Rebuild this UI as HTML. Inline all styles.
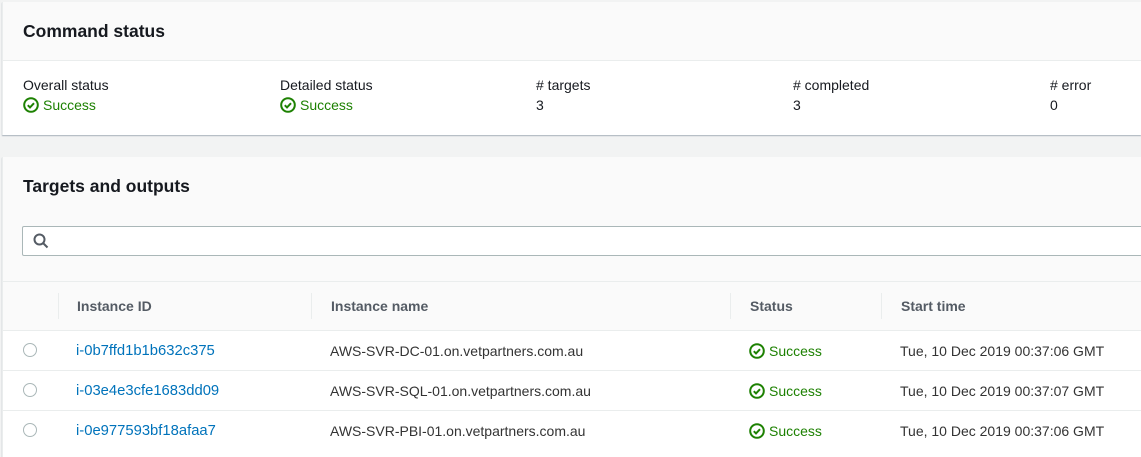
<!DOCTYPE html>
<html><head><style>
body{margin:0;width:1141px;height:446px;overflow:hidden;background:#f2f3f3;font-family:"Liberation Sans",Arial,sans-serif;color:#16191f;font-size:14px;position:relative}
.p{position:absolute;left:2px;right:0;background:#fff;box-shadow:0 1px 1px rgba(0,31,63,.3);border-left:1px solid #eaeded}
.h{font-weight:bold;font-size:17.5px;position:absolute;left:20px}
.a{position:absolute}
.g{color:#1d8102}
.l{color:#0073bb;font-size:14.8px}
.ic{display:inline-block;width:16px;height:16px;vertical-align:-3px;margin-right:4px}
.th{font-weight:bold;color:#545b64}
.r{position:absolute;left:0;right:0;border-top:1px solid #eaeded;height:40px}
.rad{position:absolute;left:20px;width:12px;height:12px;border:1px solid #aab7b8;border-radius:50%;top:12px}
</style></head><body>
<svg width="0" height="0" style="position:absolute"><defs><symbol id="ok" viewBox="0 0 16 16"><circle cx="8" cy="8" r="6.8" fill="none" stroke="#1d8102" stroke-width="2"/><path d="M4.8 8.2l2.2 2.2 4-4.2" fill="none" stroke="#1d8102" stroke-width="2"/></symbol></defs></svg>

<div class="p" style="top:2px;height:133px">
 <div style="position:absolute;left:0;right:0;top:0;height:58px;background:#fafafa;border-bottom:1px solid #eaeded"></div>
 <div class="h" style="top:19px">Command status</div>
 <div class="a" style="left:20px;top:75px">Overall status</div>
 <div class="a g" style="left:20px;top:95px"><svg class="ic"><use href="#ok"/></svg>Success</div>
 <div class="a" style="left:277px;top:75px">Detailed status</div>
 <div class="a g" style="left:277px;top:95px"><svg class="ic"><use href="#ok"/></svg>Success</div>
 <div class="a" style="left:533px;top:75px"># targets</div><div class="a" style="left:533px;top:95px">3</div>
 <div class="a" style="left:790px;top:75px"># completed</div><div class="a" style="left:790px;top:95px">3</div>
 <div class="a" style="left:1047px;top:75px"># error</div><div class="a" style="left:1047px;top:95px">0</div>
</div>

<div class="p" style="top:157px;height:300px">
 <div style="position:absolute;left:0;right:0;top:0;height:124px;background:#fafafa"></div>
 <div class="h" style="top:19px">Targets and outputs</div>
 <div class="a" style="left:19px;top:69px;right:-2px;height:28px;border:1px solid #aab7b8;border-radius:2px;background:#fff">
  <svg width="16" height="16" style="position:absolute;left:10px;top:6px"><circle cx="6.5" cy="6.5" r="5" fill="none" stroke="#545b64" stroke-width="2"/><path d="M10 10l4.5 4.5" stroke="#545b64" stroke-width="2"/></svg>
 </div>
 <div style="position:absolute;left:0;right:0;top:124px;height:49px;background:#fafafa;border-top:1px solid #eaeded"></div>
 <div class="a" style="left:55px;top:136px;width:1px;height:26px;background:#eaeded"></div>
 <div class="a" style="left:308px;top:136px;width:1px;height:26px;background:#eaeded"></div>
 <div class="a" style="left:727px;top:136px;width:1px;height:26px;background:#eaeded"></div>
 <div class="a" style="left:878px;top:136px;width:1px;height:26px;background:#eaeded"></div>
 <div class="a th" style="left:74px;top:141px">Instance ID</div>
 <div class="a th" style="left:328px;top:141px">Instance name</div>
 <div class="a th" style="left:747px;top:141px">Status</div>
 <div class="a th" style="left:898px;top:141px">Start time</div>

 <div class="r" style="top:173px"><div class="rad"></div><div class="a l" style="left:73px;top:12px">i-0b7ffd1b1b632c375</div><div class="a" style="left:327px;top:12px;color:#333">AWS-SVR-DC-01.on.vetpartners.com.au</div><div class="a g" style="left:746px;top:12px"><svg class="ic"><use href="#ok"/></svg>Success</div><div class="a" style="left:897px;top:12px;color:#333">Tue, 10 Dec 2019 00:37:06 GMT</div></div>
 <div class="r" style="top:213px"><div class="rad"></div><div class="a l" style="left:73px;top:12px">i-03e4e3cfe1683dd09</div><div class="a" style="left:327px;top:12px;color:#333">AWS-SVR-SQL-01.on.vetpartners.com.au</div><div class="a g" style="left:746px;top:12px"><svg class="ic"><use href="#ok"/></svg>Success</div><div class="a" style="left:897px;top:12px;color:#333">Tue, 10 Dec 2019 00:37:07 GMT</div></div>
 <div class="r" style="top:253px"><div class="rad"></div><div class="a l" style="left:73px;top:12px">i-0e977593bf18afaa7</div><div class="a" style="left:327px;top:12px;color:#333">AWS-SVR-PBI-01.on.vetpartners.com.au</div><div class="a g" style="left:746px;top:12px"><svg class="ic"><use href="#ok"/></svg>Success</div><div class="a" style="left:897px;top:12px;color:#333">Tue, 10 Dec 2019 00:37:06 GMT</div></div>
</div>
</body></html>
